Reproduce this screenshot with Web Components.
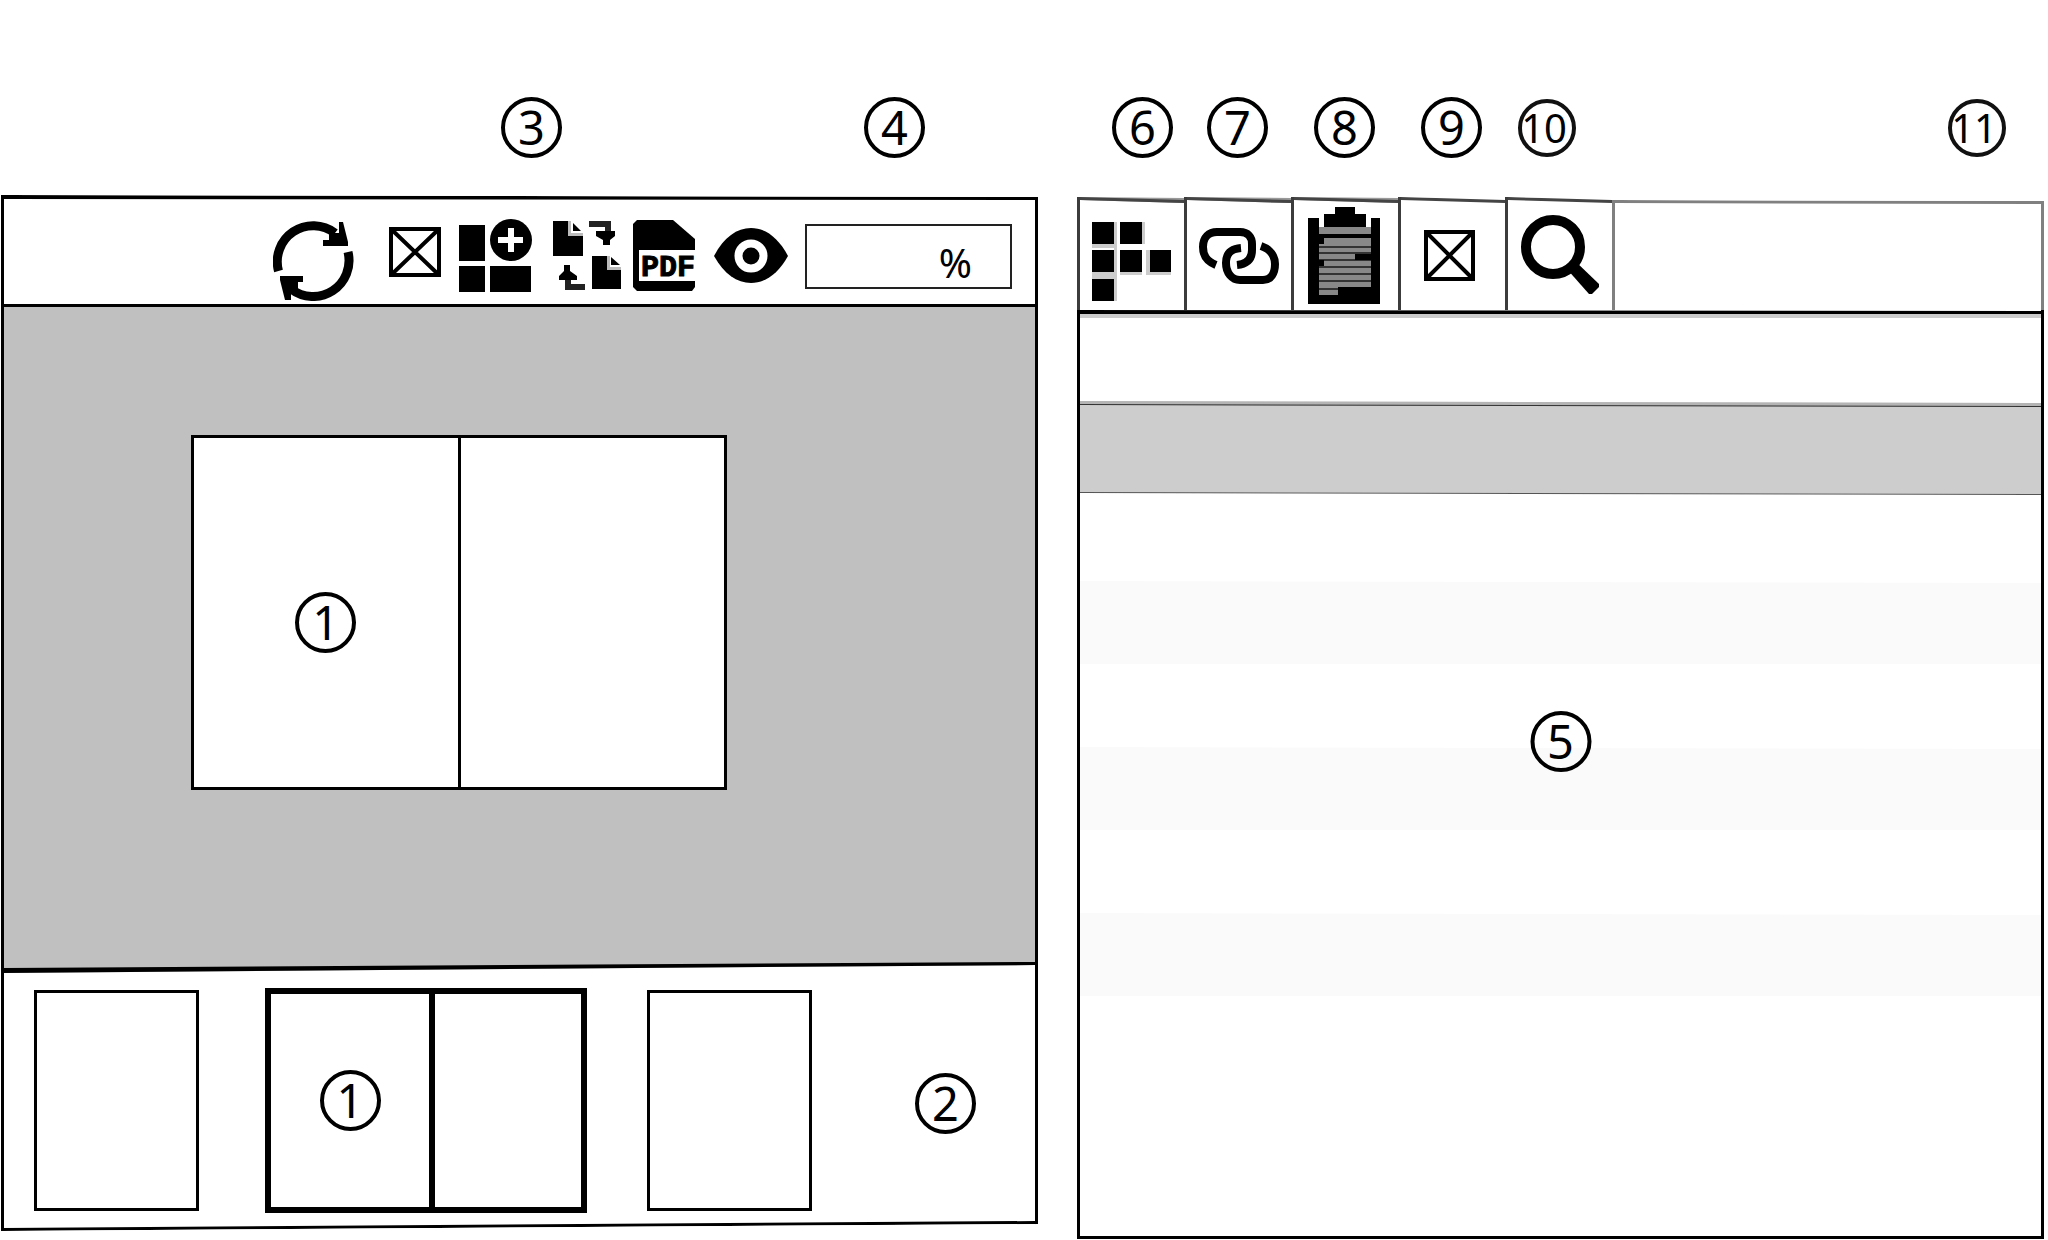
<!DOCTYPE html>
<html lang="en">
<head>
<meta charset="utf-8">
<title>Page viewer</title>
<style>
  body {
    margin: 0;
    background: #fff;
    color: #000;
    font-family: "Noto Sans", "Open Sans", sans-serif;
  }
</style>
</head>
<body>
<viewer-app></viewer-app>

<script>
// Numbered circle
class CallOut extends HTMLElement {
  constructor() {
    super();
    this.attachShadow({ mode: "open" });
  }

  connectedCallback() {
    this.shadowRoot.innerHTML = /* html */`
    <style>
      :host {
        display: flex;
        flex: none;
        box-sizing: border-box;
        width: 61px;
        height: 61px;
        align-items: center;
        justify-content: center;
        border: 4px solid #000;
        border-radius: 50%;
        font-size: 47px;
        line-height: 1;
      }
      :host([wide]) {
        width: 58px;
        height: 58px;
        padding-right: 6px;
        border-width: 4px;
        border-color: #111;
        font-size: 40px;
      }
    </style>
    <slot></slot>`;
  }
}

// Line whose ends can sit at different heights
class SlantRule extends HTMLElement {
  constructor() {
    super();
    this.attachShadow({ mode: "open" });
  }

  connectedCallback() {
    this.shadowRoot.innerHTML = /* html */`
    <style>
      :host {
        display: grid;
        flex: none;
        height: var(--height, 3px);
        background: var(--over, transparent);
      }
      .line, .under {
        grid-area: 1 / 1;
      }
      .line {
        background: var(--color, #000);
        clip-path: polygon(0 var(--left, 0px), 100% var(--right, 0px),
          100% calc(var(--right, 0px) + var(--right-weight, 3px)),
          0 calc(var(--left, 0px) + var(--left-weight, 3px)));
      }
      .under {
        background: var(--under, transparent);
        clip-path: polygon(0 calc(var(--left, 0px) + var(--left-weight, 3px)),
          100% calc(var(--right, 0px) + var(--right-weight, 3px)), 100% 100%, 0 100%);
      }
    </style>
    <div class="under"></div>
    <div class="line"></div>`;
  }
}

const ICONS = {
  refresh: [106, 82, `
    <g fill="none" stroke="#000" stroke-width="9">
      <path d="M5.500 52A36 36 0 0 1 62 14"/>
      <path d="M75 33A36 36 0 0 1 18 70"/>
    </g>
    <path d="M66 3H70L75 23V27H50V21H56V14H66ZM12 81L7 61V57H30V63H25V70H18V81Z"/>`],
  box: [52, 82, `<path d="M2 10H50V56H2ZM2 10L50 56M50 10L2 56" fill="none" stroke="#000" stroke-width="4"/>`],
  add: [81, 82, `
    <path d="M8 6H34V42H8ZM8 47H34V73H8ZM39 47H80V73H39Z"/>
    <circle cx="60" cy="21" r="21"/>
    <path d="M47 21H72M60 9V33" stroke="#fff" stroke-width="6"/>`],
  swap: [80, 82, `
    <path d="M11 2H26V17H41V37H11ZM50 37H65V51H79V70H50Z"/>
    <path d="M26 2H29V14H41V17H26ZM65 37H68V48H79V51H65Z" fill="#bbb"/>
    <path d="M31 4L39 12H31ZM69 38L78 46H69Z"/>
    <path d="M47 5H66V14M43 68H26V59" fill="none" stroke="#222" stroke-width="6"/>
    <path d="M54 12H73V17L68 21V26H61V21L54 17ZM17 61V57L22 52V46H28V52L35 57V61Z"/>`],
  pdf: [64, 82, `
    <path d="M5 1H41L63 20V68L60 72H5L1 68V5Z"/>
    <path d="M7 31H63V62H7Z" fill="#fff"/>
    <text x="9" y="57" font-family="Liberation Mono, monospace" font-weight="700" font-size="30" stroke="#000" stroke-width="1">PDF</text>`],
  eye: [82, 82, `
    <path d="M8 37C18 18 31 9 45 9S72 18 82 37C72 55 59 64 45 64S18 55 8 37Z"/>
    <circle cx="45" cy="37" r="12.500" fill="none" stroke="#fff" stroke-width="8"/>`],
  grid: [104, 107, `
    <path d="M12 45H37V49H12ZM34 23H37V102H34ZM62 23H65V45H62ZM40 73H62V76H40ZM12 73H34V80H12ZM66 51H70V76H66ZM66 73H91V76H66Z" fill="#ccc"/>
    <path d="M12 23H34V45H12ZM40 23H62V45H40ZM12 51H34V73H12ZM40 51H62V73H40ZM70 51H91V73H70ZM12 80H34V102H12Z"/>`],
  link: [104, 107, `
    <g fill="none" stroke="#000" stroke-width="8">
      <path d="M29 66C19 62 16 56 16 48C16 38 22 33 30 33H53C61 33 65 38 65 45V51C65 60 60 65 50 66"/>
      <path d="M54 49C43 50 39 55 39 64C39 74 45 81 53 81H76C84 81 88 74 88 65C88 57 83 50 74 47"/>
    </g>`],
  clipboard: [104, 107, `
    <path d="M14 19H25V31H30V15H41V8H61V15H72V31H77V19H86V105H14Z"/>
    <path d="M25 28H77V88H25ZM25 88H44V96H25Z" fill="#888"/>
    <path d="M25 37H77" stroke="#000" stroke-width="4"/>
    <path d="M25 48H77M25 54H77M25 61H77M25 68H77M25 75H77M25 82H77M25 90H44" stroke="#333" stroke-width="2"/>
    <path d="M25 39H30V45H25ZM61 55H77V61H61ZM25 61H30V67H25Z"/>
    <path d="M30 15H72V28H30Z"/>`],
  frame: [104, 107, `<path d="M25 33H72V80H25ZM25 33L72 80M72 33L25 80" fill="none" stroke="#000" stroke-width="4"/>`],
  search: [104, 107, `
    <circle cx="45" cy="48" r="27" fill="none" stroke="#000" stroke-width="10"/>
    <path d="M58 69L66 61L91 85V88L84 95H81Z"/>`],
};

class ToolIcon extends HTMLElement {
  constructor() {
    super();
    this.attachShadow({ mode: "open" });
  }

  connectedCallback() {
    const [width, height, shapes] = ICONS[this.getAttribute("name")];
    this.shadowRoot.innerHTML = /* html */`
    <style>
      :host, svg {
        display: block;
      }
    </style>
    <svg width="${width}" height="${height}" viewBox="0 0 ${width} ${height}" aria-hidden="true">${shapes}</svg>`;
  }
}

class PagePanel extends HTMLElement {
  constructor() {
    super();
    this.attachShadow({ mode: "open" });
  }

  static get styles() {
    return /* css */`
      :host {
        display: flex;
        flex-direction: column;
        box-sizing: border-box;
        border: solid #000;
        border-width: 0 3px;
        clip-path: polygon(0 0, 100% 2px, 100% calc(100% - 7px), 0 100%);
      }
      .top {
        --height: 6px;
        --right: 2px;
        --left-weight: 4px;
      }
      .toolbar {
        display: flex;
        justify-content: flex-end;
        gap: 10px;
        height: 85px;
        padding: 18px 23px 0 0;
      }
      button {
        flex: none;
        padding: 0;
        border: 0;
        background: none;
        align-self: flex-start;
      }
      input {
        box-sizing: border-box;
        width: 207px;
        height: 65px;
        margin: 5px 0 0 7px;
        padding: 12px 38px 0 0;
        border: 2px solid #222;
        border-radius: 0;
        background: #fff;
        color: #000;
        font: 40px "Noto Sans", "Open Sans", sans-serif;
        text-align: right;
      }
      .stage {
        display: flex;
        flex: 1;
        align-items: flex-start;
        padding: 128px 0 0 187px;
        background: #c0c0c0;
      }
      .spread {
        display: flex;
        box-sizing: border-box;
        width: 536px;
        height: 355px;
        border: 3px solid #000;
        background: #fff;
      }
      .spread div {
        display: flex;
        flex: 1;
        align-items: center;
        justify-content: center;
      }
      .spread div + div {
        border-left: 3px solid #000;
      }
      .stage .spread div {
        padding-top: 20px;
      }
      .divider {
        --height: 12px;
        --over: #c0c0c0;
        --under: #fff;
        --left: 6px;
        --left-weight: 5px;
      }
      .strip {
        display: flex;
        align-items: center;
        height: 229px;
        padding: 12px 0 6px 30px;
      }
      .page {
        box-sizing: border-box;
        width: 165px;
        height: 221px;
        border: 3px solid #000;
      }
      .strip .spread {
        width: 322px;
        height: 225px;
        margin: 0 60px 0 66px;
        border-width: 6px;
      }
      .strip .spread div + div {
        flex: none;
        width: 146px;
        border-left-width: 6px;
      }
      .strip call-out.strip-number {
        margin: 6px 0 0 103px;
      }
      .bottom {
        --height: 10px;
        --left: 7px;
      }
    `;
  }

  connectedCallback() {
    this.shadowRoot.innerHTML = /* html */`
    <style>${PagePanel.styles}</style>
    <slant-rule class="top"></slant-rule>
    <div class="toolbar">
      <button aria-label="Refresh"><tool-icon name="refresh"></tool-icon></button>
      <button aria-label="Fit"><tool-icon name="box"></tool-icon></button>
      <button aria-label="Add"><tool-icon name="add"></tool-icon></button>
      <button aria-label="Swap pages"><tool-icon name="swap"></tool-icon></button>
      <button aria-label="PDF"><tool-icon name="pdf"></tool-icon></button>
      <button aria-label="Preview"><tool-icon name="eye"></tool-icon></button>
      <input aria-label="Zoom" value="%">
    </div>
    <slant-rule></slant-rule>
    <div class="stage">
      <div class="spread"><div><call-out>1</call-out></div><div></div></div>
    </div>
    <slant-rule class="divider"></slant-rule>
    <div class="strip">
      <div class="page"></div>
      <div class="spread"><div><call-out>1</call-out></div><div></div></div>
      <div class="page"></div>
      <call-out class="strip-number">2</call-out>
    </div>
    <slant-rule class="bottom"></slant-rule>`;
  }
}

class ListPanel extends HTMLElement {
  constructor() {
    super();
    this.attachShadow({ mode: "open" });
  }

  static get styles() {
    return /* css */`
      :host {
        display: flex;
        flex-direction: column;
      }
      .tabs {
        display: flex;
        height: 113px;
      }
      button {
        display: flex;
        flex: none;
        flex-direction: column;
        justify-content: flex-start;
        box-sizing: border-box;
        width: 107px;
        height: 113px;
        padding: 0;
        border: 0;
        border-left: 3px solid #3c3c3c;
        background: none;
        clip-path: polygon(0 0, 3px 0, 100% 1px, 100% 100%, 0 100%);
      }
      button slant-rule {
        --height: 7px;
        --right: 3px;
        --over: #999;
        --under: #fff;
        --color: #444;
        align-self: stretch;
      }
      button.clear slant-rule {
        --over: transparent;
      }
      button tool-icon {
        margin-top: -5px;
      }
      .rest {
        flex: 1;
        border: solid #808080;
        border-width: 0 3px;
        clip-path: polygon(0 3px, 100% 4px, 100% 100%, 0 100%);
      }
      .rest slant-rule {
        --height: 8px;
        --left: 3px;
        --right: 4px;
        --color: #808080;
      }
      .list {
        display: flex;
        flex: 1;
        flex-direction: column;
        border: 3px solid #000;
        border-top: 0;
      }
      .head {
        --height: 8px;
        --left-weight: 4px;
        --right: 1px;
        --under: #ccc;
      }
      .row {
        height: 83px;
        clip-path: polygon(0 0, 100% 2px, 100% calc(100% + 2px), 0 100%);
      }
      .row.odd {
        background: #fafafa;
      }
      .row.first {
        height: 86px;
      }
      .selected {
        display: flex;
        flex-direction: column;
        height: 94px;
        background: #cdcdcd;
        clip-path: polygon(0 0, 100% 2px, 100% 100%, 0 calc(100% - 2px));
      }
      .selected slant-rule {
        --height: 7px;
        --left: 3px;
        --right: 5px;
        --left-weight: 1px;
        --right-weight: 1px;
        --over: #b4b4b4;
        --under: #cdcdcd;
        --color: #333;
      }
      .selected slant-rule.end {
        --height: 4px;
        --left: 1px;
        --right: 3px;
        --over: #cdcdcd;
        --color: #555;
        margin-top: auto;
      }
      /* badge sits across two rows */
      .body {
        position: relative;
        flex: 1;
      }
      .body call-out {
        position: absolute;
        top: 216px;
        left: 50%;
        transform: translateX(-50%);
      }
    `;
  }

  connectedCallback() {
    const tabs = [
      ["grid", "Thumbnails"],
      ["link", "Links"],
      ["clipboard", "Clipboard"],
      ["frame", "Frames"],
      ["search", "Search"],
    ];
    this.shadowRoot.innerHTML = /* html */`
    <style>${ListPanel.styles}</style>
    <div class="tabs">
      ${tabs.map(([icon, label], i) => /* html */`
      <button aria-label="${label}" class="${i > 2 ? "clear" : ""}"><slant-rule></slant-rule><tool-icon name="${icon}"></tool-icon></button>`).join("")}
      <div class="rest"><slant-rule></slant-rule></div>
    </div>
    <div class="list">
      <slant-rule class="head"></slant-rule>
      <div class="row"></div>
      <div class="selected"><slant-rule></slant-rule><slant-rule class="end"></slant-rule></div>
      <div class="body">
        <div class="row first"></div>
        <div class="row odd"></div>
        <div class="row"></div>
        <div class="row odd"></div>
        <div class="row"></div>
        <div class="row odd"></div>
        <call-out>5</call-out>
      </div>
    </div>`;
  }
}

class ViewerApp extends HTMLElement {
  constructor() {
    super();
    this.attachShadow({ mode: "open" });
  }

  static get styles() {
    return /* css */`
      :host {
        display: grid;
        box-sizing: border-box;
        min-height: 100vh;
        grid-template-columns: 1037fr 967fr;
        grid-template-rows: 195px 1fr;
        column-gap: 39px;
        padding: 0 4px 1px 1px;
      }
      .numbers {
        display: flex;
        box-sizing: border-box;
        align-items: center;
        padding-top: 60px;
      }
      .left {
        gap: 302px;
        padding-left: 500px;
      }
      .right {
        gap: 46px;
        padding-left: 35px;
        padding-right: 38px;
      }
      .right call-out:first-child {
        margin-right: -12px;
      }
      .right call-out[wide] {
        margin-left: -10px;
      }
      .right call-out:last-child {
        margin-left: auto;
      }
      page-panel {
        margin-bottom: 8px;
      }
      list-panel {
        margin-top: 2px;
      }
    `;
  }

  connectedCallback() {
    this.shadowRoot.innerHTML = /* html */`
    <style>${ViewerApp.styles}</style>
    <div class="numbers left">
      <call-out>3</call-out>
      <call-out>4</call-out>
    </div>
    <div class="numbers right">
      <call-out>6</call-out>
      <call-out>7</call-out>
      <call-out>8</call-out>
      <call-out>9</call-out>
      <call-out wide>10</call-out>
      <call-out wide>11</call-out>
    </div>
    <page-panel></page-panel>
    <list-panel></list-panel>`;
  }
}

customElements.define("call-out", CallOut);
customElements.define("slant-rule", SlantRule);
customElements.define("tool-icon", ToolIcon);
customElements.define("page-panel", PagePanel);
customElements.define("list-panel", ListPanel);
customElements.define("viewer-app", ViewerApp);
</script>
</body>
</html>
